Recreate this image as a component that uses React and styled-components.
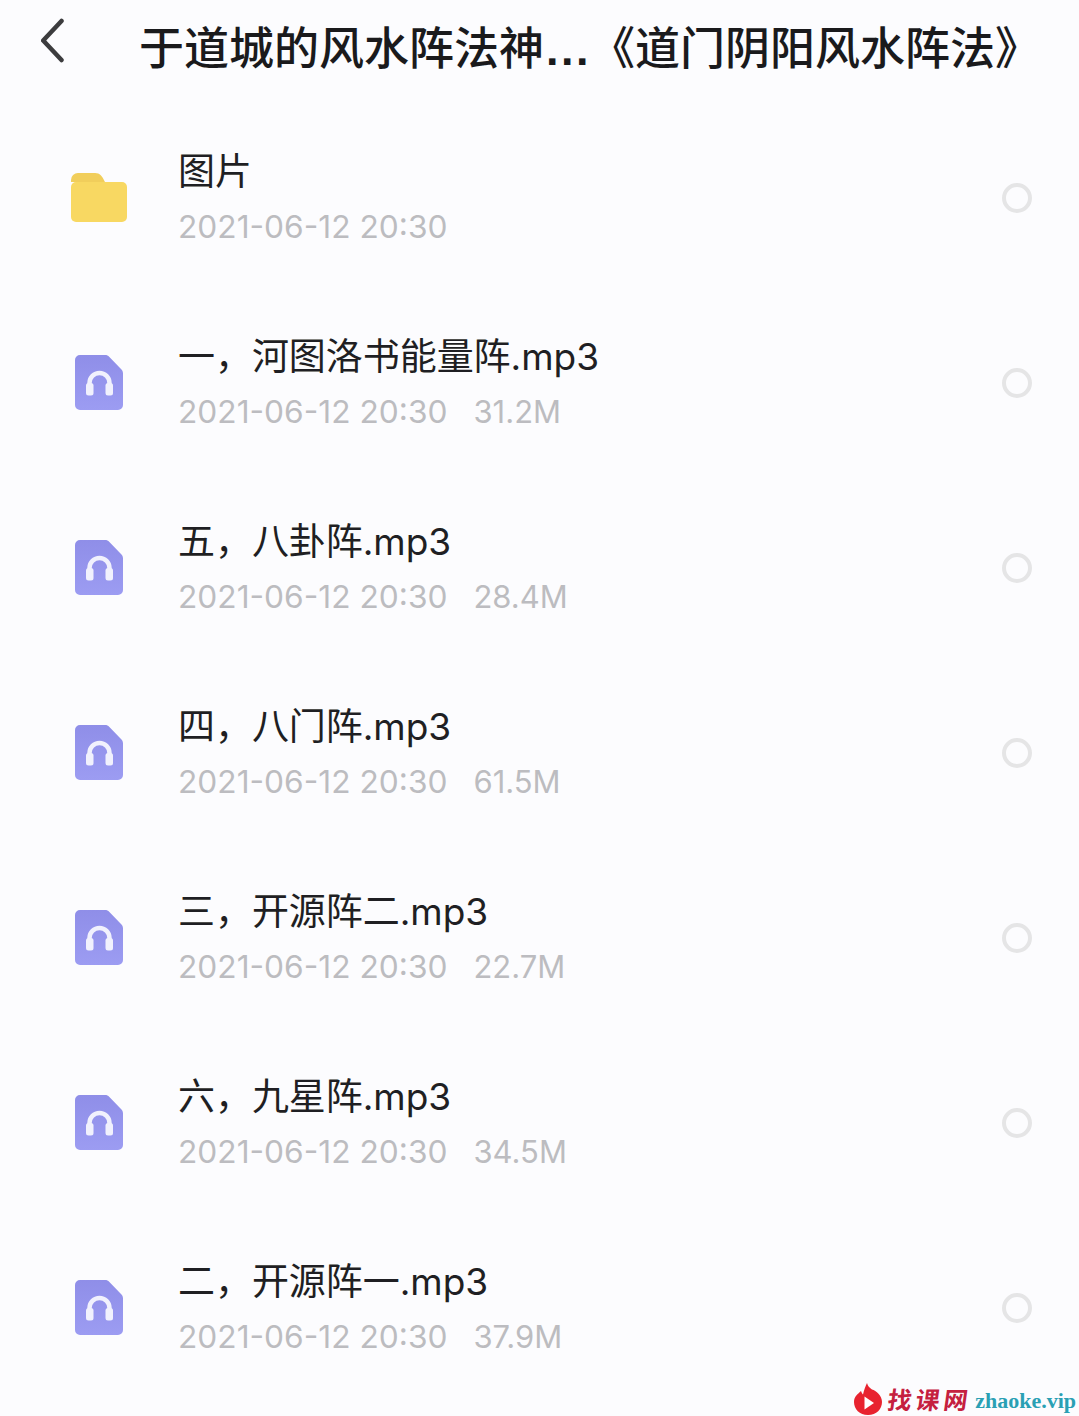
import React from 'react';
import styled, { createGlobalStyle } from 'styled-components';

const files = [
	{ name: '一，河图洛书能量阵.mp3', size: '31.2M' },
	{ name: '五，八卦阵.mp3', size: '28.4M' },
	{ name: '四，八门阵.mp3', size: '61.5M' },
	{ name: '三，开源阵二.mp3', size: '22.7M' },
	{ name: '六，九星阵.mp3', size: '34.5M' },
	{ name: '二，开源阵一.mp3', size: '37.9M' }
];

const FolderIcon = () => (
	<svg width='56' height='49' viewBox='0 0 56 49'>
		<path d='M0 7a7 7 0 0 1 7-7h17c5 0 7 3 10 9H0z' fill='#f1ce5b' />
		<path d='M0 14a5 5 0 0 1 5-5h46a5 5 0 0 1 5 5v30a5 5 0 0 1-5 5H5a5 5 0 0 1-5-5z' fill='#f8d862' />
	</svg>
);

const AudioIcon = () => (
	<svg width='48' height='56' viewBox='0 0 48 56'>
		<defs>
			<linearGradient id='audioFill' x1='0' y1='0' x2='0' y2='1'>
				<stop offset='0' stopColor='#8f8ee8' />
				<stop offset='1' stopColor='#9c9cf2' />
			</linearGradient>
		</defs>
		<path d='M5 0h25c2 0 3 .6 4.400 2l11.600 12c1.400 1.400 2 2.600 2 4.600V50a5 5 0 0 1-5 5H5a5 5 0 0 1-5-5V5a5 5 0 0 1 5-5z' fill='url(#audioFill)' />
		<path d='M14.500 32v-4a10 10 0 0 1 20 0v4' fill='none' stroke='#f1f1fd' strokeWidth='4.500' />
		<rect x='11' y='28' width='7.500' height='12.500' rx='2.500' fill='#f1f1fd' />
		<rect x='30.500' y='28' width='7.500' height='12.500' rx='2.500' fill='#f1f1fd' />
	</svg>
);

const App = () => {
	return (
		<Page>
			<GlobalStyle />
			<Header>
				<BackButton>
					<svg width='26' height='46' viewBox='0 0 26 46'>
						<path d='M20.500 3 2.200 22.500 20.500 42' fill='none' stroke='#3c3c3e' strokeWidth='4.500' strokeLinecap='round' strokeLinejoin='round' />
					</svg>
				</BackButton>
				<Title>
					于道城的风水阵法神<Dots>...</Dots>《道门阴阳风水阵法》
				</Title>
			</Header>
			<List>
				<Row>
					<IconSlot><FolderIcon /></IconSlot>
					<Info>
						<Name>图片</Name>
						<Meta><span>2021-06-12 20:30</span></Meta>
					</Info>
					<Radio />
				</Row>
				{files.map((file) => (
					<Row key={file.name}>
						<IconSlot><AudioIcon /></IconSlot>
						<Info>
							<Name>{file.name}</Name>
							<Meta>
								<span>2021-06-12 20:30</span>
								<Size>{file.size}</Size>
							</Meta>
						</Info>
						<Radio />
					</Row>
				))}
			</List>
			<Watermark>
				<svg width='30' height='33' viewBox='0 0 30 33'>
					<path d='M15 33C6.500 33 1 27 1 20 1 14 5 12 8 9c.6 1.500 1 2.500 2 3.500C11 8 12.500 4 14 1c1 4 3.500 5 5 6.500 4 1 10 6 10 12.500 0 7-5.500 13-14 13z' fill='#e8232f' />
					<path d='M11.500 14.500 21 21l-9.500 6.500z' fill='#fff' />
				</svg>
				<Brand>找课网</Brand>
				<Domain>zhaoke.vip</Domain>
			</Watermark>
		</Page>
	);
};

export default App;

const GlobalStyle = createGlobalStyle`
	html, body {
		margin: 0;
		padding: 0;
		background: #fcfcfe;
	}
`;

const Page = styled.div`
	position: relative;
	width: 1079px;
	height: 1416px;
	overflow: hidden;
	background: #fcfcfe;
	font-family: 'Inter', 'Noto Sans CJK SC', sans-serif;
`;

const Header = styled.div`
	display: flex;
	align-items: flex-start;
	height: 94px;
	box-sizing: border-box;
	padding: 18px 0 0 41px;
`;

const BackButton = styled.div`
	display: flex;
	width: 98px;
	height: 46px;
`;

const Title = styled.div`
	margin-top: 1px;
	font-family: 'Noto Sans CJK SC', sans-serif;
	font-size: 45px;
	font-weight: 500;
	line-height: 54px;
	color: #1a1a1c;
	white-space: nowrap;
`;

const Dots = styled.span`
	display: inline-block;
	width: 46px;
	padding-left: 2px;
	box-sizing: border-box;
	font-family: 'Liberation Sans', sans-serif;
	font-weight: 700;
	letter-spacing: 2.500px;
`;

const List = styled.div`
	display: flex;
	flex-direction: column;
	padding-top: 11px;
`;

const Row = styled.div`
	display: flex;
	align-items: center;
	height: 185px;
	padding: 0 47px 0 71px;
`;

const IconSlot = styled.div`
	display: flex;
	justify-content: center;
	align-items: center;
	width: 56px;
	margin-right: 51px;
`;

const Info = styled.div`
	flex: 1;
	display: flex;
	flex-direction: column;
	gap: 9px;
	padding-top: 3px;
`;

const Name = styled.div`
	font-size: 37px;
	letter-spacing: -0.050px;
	line-height: 46px;
	color: #1f1f23;
`;

const Meta = styled.div`
	display: flex;
	gap: 26px;
	font-size: 31.700px;
	line-height: 46px;
	color: #bcbcc0;
`;

const Size = styled.span`
	font-size: 31px;
`;

const Radio = styled.div`
	box-sizing: border-box;
	width: 30px;
	height: 30px;
	border: 4px solid #e5e5e6;
	border-radius: 50%;
`;

const Watermark = styled.div`
	position: absolute;
	right: 3px;
	bottom: 1px;
	display: flex;
	align-items: center;
	height: 34px;
`;

const Brand = styled.span`
	margin-left: 5px;
	font-family: 'Noto Sans CJK SC', sans-serif;
	font-size: 24px;
	font-weight: 700;
	letter-spacing: 4px;
	color: #c5203f;
	transform: skewX(-8deg);
`;

const Domain = styled.span`
	margin: 5px 0 0 3px;
	font-family: 'Liberation Serif', serif;
	font-size: 22px;
	font-weight: 700;
	color: #2aa0b4;
`;
